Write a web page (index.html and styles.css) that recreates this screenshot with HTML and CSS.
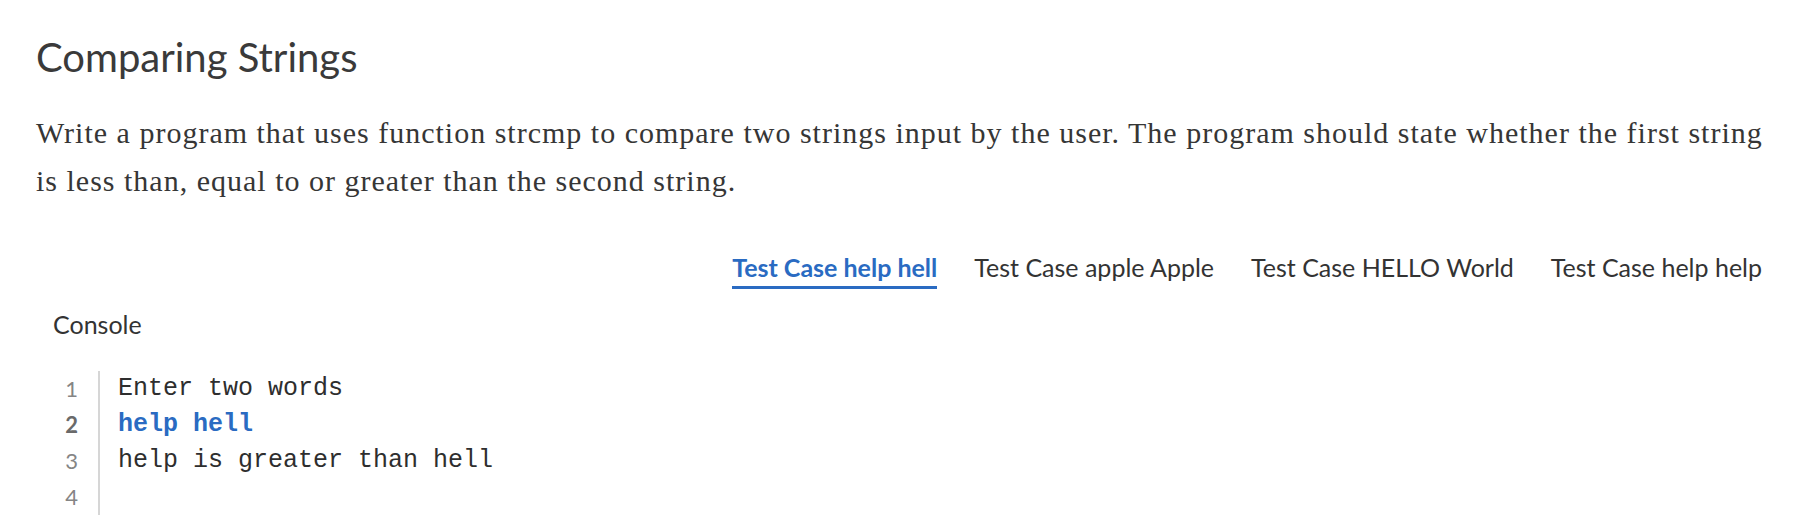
FILE: index.html
```html
<!DOCTYPE html>
<html lang="en">
<head>
<meta charset="utf-8">
<title>Comparing Strings</title>
<link rel="stylesheet" href="styles.css">
</head>
<body>
<main class="page">
  <h1 class="title">Comparing Strings</h1>
  <p class="desc">Write a program that uses function strcmp to compare two strings input by the user. The program should state whether the first string is less than, equal to or greater than the second string.</p>
  <nav class="tabs">
    <span class="tab active">Test Case help hell</span>
    <span class="tab">Test Case apple Apple</span>
    <span class="tab">Test Case HELLO World</span>
    <span class="tab">Test Case help help</span>
  </nav>
  <div class="console-label">Console</div>
  <div class="console">
    <div class="gutter">
      <div class="ln">1</div>
      <div class="ln cur">2</div>
      <div class="ln">3</div>
      <div class="ln">4</div>
    </div>
    <div class="code">
      <div class="line">Enter two words</div>
      <div class="line input">help hell</div>
      <div class="line">help is greater than hell</div>
      <div class="line">&nbsp;</div>
    </div>
  </div>
</main>
</body>
</html>
```
FILE: styles.css
```css
html, body {
  margin: 0;
  padding: 0;
  background: #fff;
}
.page {
  padding: 33px 36px 0 36px;
  color: #363636;
}
.title {
  font-family: Lato, "Liberation Sans", sans-serif;
  font-weight: 400;
  font-size: 40px;
  line-height: 48px;
  margin: 0;
  color: #3a3a3a;
}
.desc {
  font-family: "Liberation Serif", "DejaVu Serif", serif;
  font-size: 30px;
  letter-spacing: 1px;
  line-height: 48px;
  margin: 28px 0 0 0;
  color: #363636;
}
.tabs {
  display: flex;
  justify-content: flex-end;
  gap: 37px;
  margin-top: 46px;
  padding-right: 4px;
}
.tab {
  font-family: Lato, "Liberation Sans", sans-serif;
  font-size: 25px;
  line-height: 32px;
  color: #333;
  padding-bottom: 3px;
  border-bottom: 3px solid transparent;
}
.tab.active {
  color: #2a6bc2;
  font-weight: 700;
  border-bottom-color: #2a6bc2;
}
.console-label {
  font-family: Lato, "Liberation Sans", sans-serif;
  font-size: 25px;
  line-height: 30px;
  color: #333;
  margin: 20px 0 0 17px;
}
.console {
  display: flex;
  margin-top: 32px;
  padding-left: 14px;
}
.gutter {
  width: 28px;
  padding-right: 20px;
  border-right: 2px solid #d6d6d6;
  text-align: right;
}
.ln {
  font-family: Lato, "Liberation Sans", sans-serif;
  font-size: 22px;
  line-height: 36px;
  color: #858585;
}
.ln.cur {
  font-weight: 700;
  color: #6a6a6a;
}
.code {
  padding-left: 18px;
}
.line {
  font-family: "Liberation Mono", "DejaVu Sans Mono", monospace;
  font-size: 25px;
  line-height: 36px;
  color: #2e2e2e;
  white-space: pre;
}
.line.input {
  color: #2a6bc2;
  font-weight: 700;
}
```
